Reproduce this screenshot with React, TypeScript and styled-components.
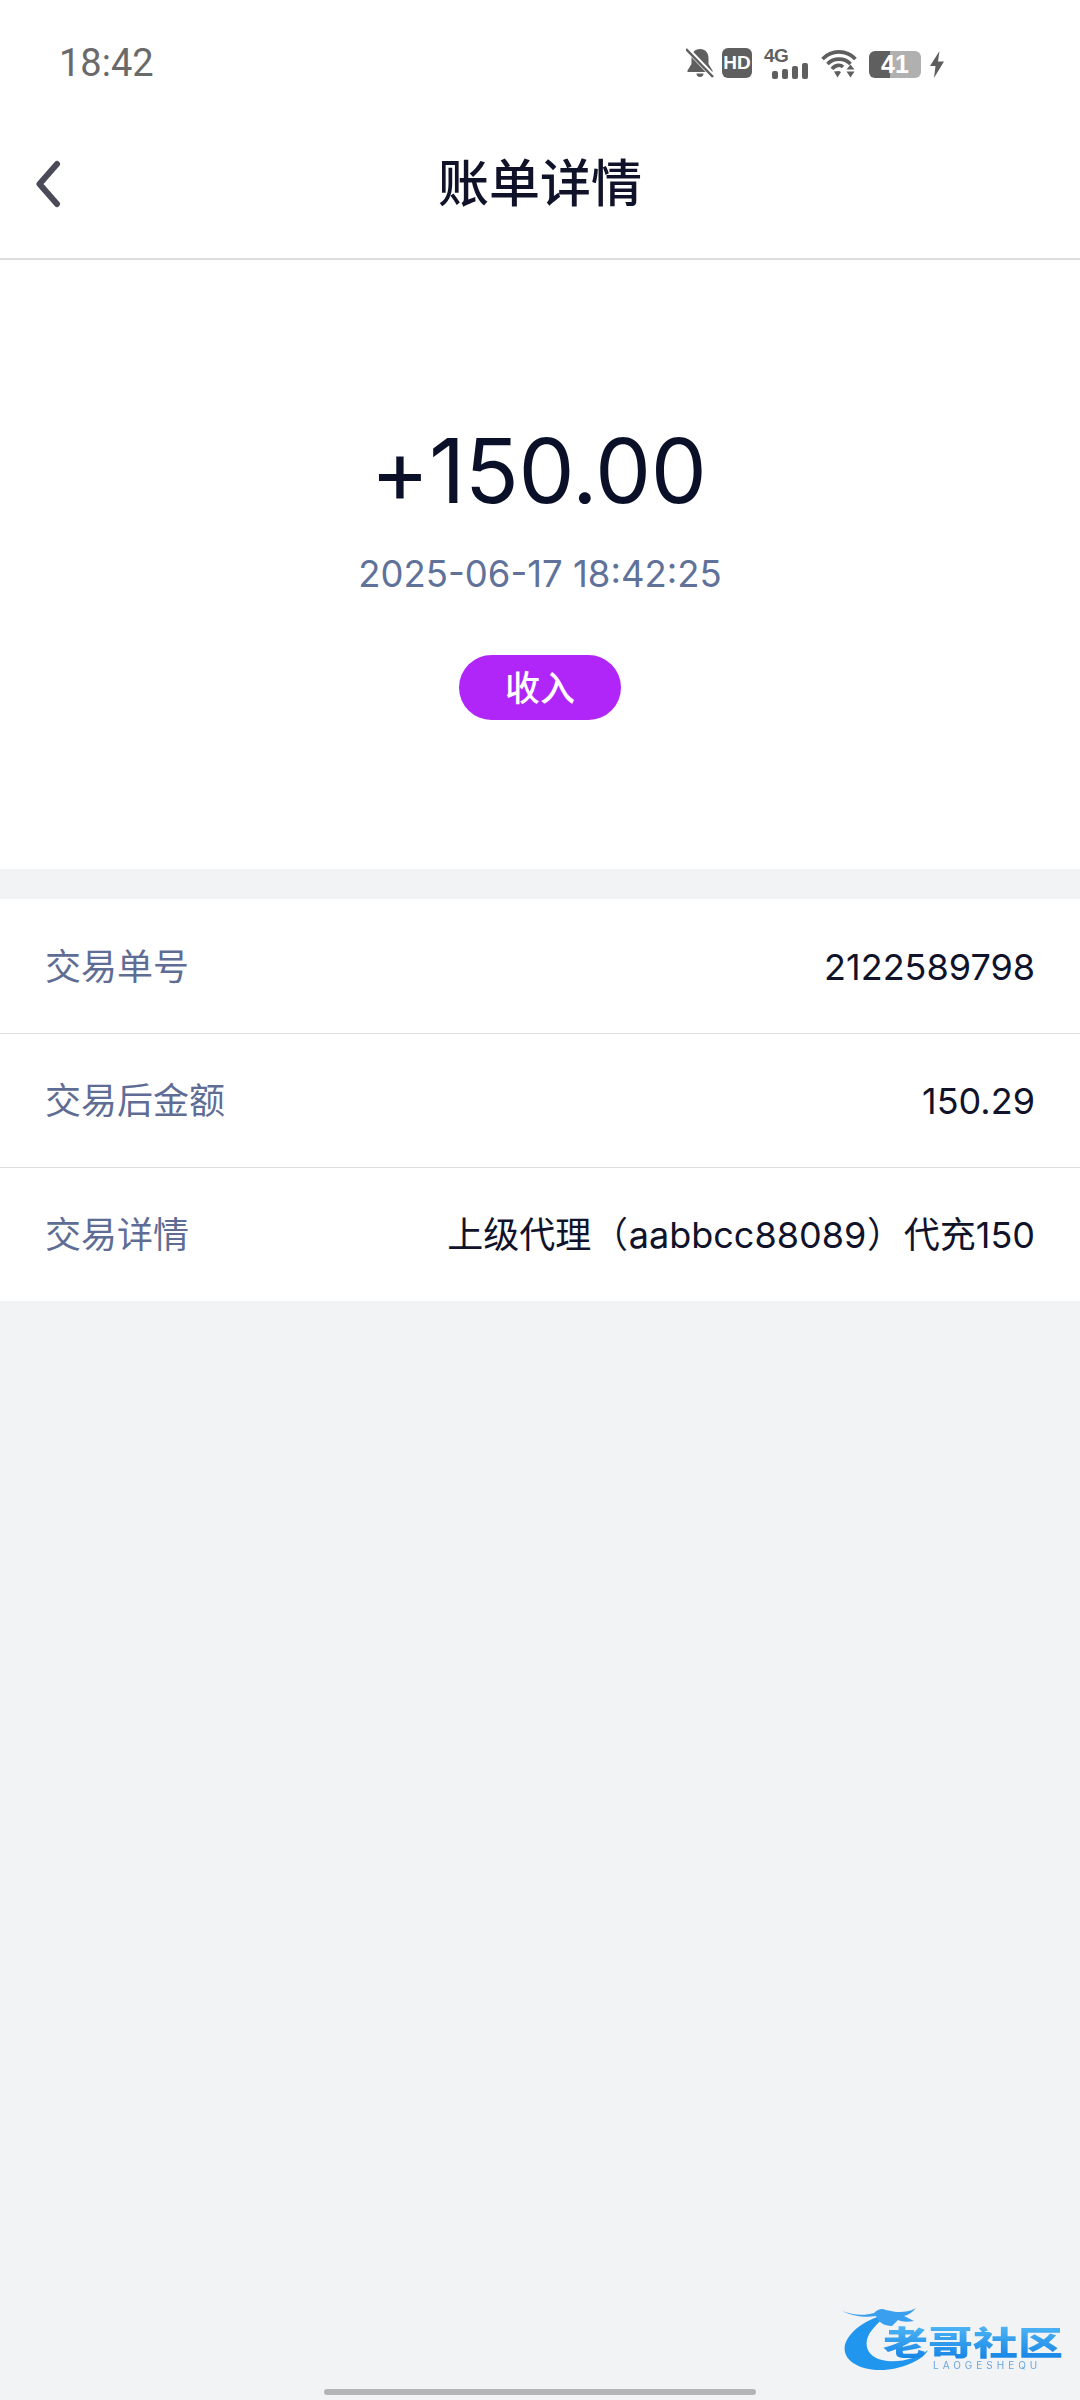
import React from "react";
import styled, { createGlobalStyle } from "styled-components";

const GlobalStyle = createGlobalStyle`
  html, body { margin: 0; padding: 0; background: #f2f3f5; }
  * { box-sizing: border-box; }
  body { font-family: Inter, "Noto Sans CJK SC", sans-serif; }
`;

const Page = styled.div`
  position: relative;
  width: 1080px;
  height: 2400px;
  overflow: hidden;
  background: #f2f3f5;
  display: flex;
  flex-direction: column;
`;

const StatusBar = styled.div`
  height: 80px;
  padding: 45px 136px 0 59px;
  background: #fff;
  display: flex;
  justify-content: space-between;
  align-items: flex-start;
`;

const Clock = styled.span`
  font-family: Roboto, sans-serif;
  font-size: 38px;
  line-height: 36px;
  color: #6a6a6a;
`;

const StatusIcons = styled.div`
  display: flex;
  align-items: flex-end;
  height: 32px;
  margin-top: 1px;
  color: #5f5f5f;
`;

const IconSlot = styled.div<{ $gap: number }>`
  display: flex;
  margin-right: ${(p) => p.$gap}px;
`;

const HdBadge = styled.div`
  width: 30px;
  height: 30px;
  margin-right: 12px;
  border-radius: 6px;
  background: #5f5f5f;
  color: #fff;
  font: 800 19px/30px "Liberation Sans", sans-serif;
  text-align: center;
`;

const Signal = styled.div`
  width: 44px;
  height: 30px;
  margin-right: 13px;
  display: flex;
  flex-direction: column;
  justify-content: space-between;
`;

const SignalLabel = styled.span`
  font: 800 19px/15px "Liberation Sans", sans-serif;
  letter-spacing: -0.5px;
`;

const SignalBars = styled.div`
  display: flex;
  align-items: flex-end;
  justify-content: flex-end;
  gap: 4px;
`;

const SignalBar = styled.i<{ $h: number }>`
  display: block;
  width: 6px;
  height: ${(p) => p.$h}px;
  border-radius: 2px;
  background: #5f5f5f;
`;

const Battery = styled.div`
  width: 52px;
  height: 27px;
  margin-right: 9px;
  border-radius: 6px;
  background: linear-gradient(90deg, #5f5f5f 0 41%, #b0b0b0 41% 100%);
  color: #fff;
  font: 700 25px/27px "Liberation Sans", sans-serif;
  text-align: center;
`;

const Header = styled.header`
  height: 180px;
  padding: 30px 32px 0;
  background: #fff;
  border-bottom: 2px solid #dcdcdc;
  position: relative;
  display: flex;
  align-items: center;
  justify-content: center;
`;

const BackButton = styled.button`
  position: absolute;
  left: 34px;
  top: 80px;
  width: 28px;
  height: 48px;
  padding: 0;
  border: 0;
  background: none;
  display: flex;
`;

const Title = styled.h1`
  margin: 0;
  font-size: 51px;
  font-weight: 500;
  line-height: 60px;
  color: #0f1228;
`;

const Summary = styled.section`
  height: 609px;
  padding-top: 156px;
  background: #fff;
  display: flex;
  flex-direction: column;
  align-items: center;
`;

const Amount = styled.div`
  font-size: 89px;
  line-height: 110px;
  letter-spacing: -0.4px;
  margin-right: 3px;
  color: #0b1029;
`;

const DateText = styled.div`
  margin-top: 26px;
  font-size: 36.5px;
  line-height: 44px;
  color: #60729a;
`;

const Pill = styled.div`
  margin-top: 59px;
  width: 162px;
  height: 65px;
  border-radius: 33px;
  background: #b026f8;
  color: #fff;
  font-size: 35px;
  font-weight: 500;
  line-height: 67px;
  text-align: center;
`;

const List = styled.section`
  margin-top: 30px;
  background: #fff;
`;

const Row = styled.div`
  height: 134px;
  padding: 1px 45px 0;
  display: flex;
  align-items: center;
  justify-content: space-between;
  & + & { border-top: 1px solid #dfdfdf; }
`;

const Label = styled.span`
  font-size: 36px;
  line-height: 44px;
  color: #5f6d95;
`;

const Value = styled.span`
  font-size: 36px;
  line-height: 44px;
  color: #10132a;
`;

const Paren = styled.span`
  margin: 0 0.75px;
`;

const Watermark = styled.div`
  position: absolute;
  left: 842px;
  top: 2304px;
  width: 226px;
  height: 72px;
  filter: blur(0.5px);
`;

const WatermarkName = styled.div`
  position: absolute;
  left: 41px;
  top: 16px;
  font-size: 45px;
  font-weight: 900;
  line-height: 46px;
  white-space: nowrap;
  transform: scaleY(0.74);
  background: linear-gradient(180deg, #4db4f4 0%, #1583e6 100%);
  -webkit-background-clip: text;
  background-clip: text;
  color: transparent;
`;

const WatermarkSub = styled.div`
  position: absolute;
  left: 91px;
  top: 56px;
  font-size: 10px;
  line-height: 10px;
  letter-spacing: 4px;
  white-space: nowrap;
  color: #6ca6dd;
`;

const HomeBar = styled.div`
  position: absolute;
  left: 324px;
  top: 2389px;
  width: 432px;
  height: 6px;
  border-radius: 3px;
  background: #b4b4b4;
`;

const rows: { label: string; value: React.ReactNode }[] = [
  { label: "交易单号", value: "2122589798" },
  { label: "交易后金额", value: "150.29" },
  {
    label: "交易详情",
    value: (
      <>
        上级代理<Paren>（</Paren>aabbcc88089<Paren>）</Paren>代充150
      </>
    ),
  },
];

export default function App() {
  return (
    <Page>
      <GlobalStyle />
      <StatusBar>
        <Clock>18:42</Clock>
        <StatusIcons>
          <IconSlot $gap={8}>
            <svg width="28" height="30" viewBox="0 0 28 30">
              <path d="M14 1c5.500 0 8.500 4 8.500 9v6l4 6.500v1.500H1.500v-1.500l4-6.500V10C5.500 5 8.500 1 14 1z" fill="#5f5f5f" />
              <path d="M10.500 25.500h7a3.500 3.500 0 0 1-7 0z" fill="#5f5f5f" />
              <path d="M1 1l26 27" stroke="#fff" strokeWidth="5" />
              <path d="M0 1l27 28" stroke="#5f5f5f" strokeWidth="2.500" />
            </svg>
          </IconSlot>
          <HdBadge>HD</HdBadge>
          <Signal>
            <SignalLabel>4G</SignalLabel>
            <SignalBars>
              <SignalBar $h={8} />
              <SignalBar $h={10} />
              <SignalBar $h={13} />
              <SignalBar $h={16} />
            </SignalBars>
          </Signal>
          <IconSlot $gap={12}>
            <svg width="36" height="29" viewBox="0 0 36 29">
              <g fill="none" stroke="#5f5f5f" strokeWidth="3.600">
                <path d="M1.500 10C10.500 0.500 25.500 0.500 34.500 10" />
                <path d="M6.500 15C12.500 8.500 23.500 8.500 29.500 15" />
                <path d="M11 20C14.500 15.500 19.500 15.500 22 18" />
              </g>
              <path d="M13 22.500l5-.5 2 1-3.500 5.500z" fill="#5f5f5f" />
              <path d="M29.500 15.500l4 5h-8zM29.500 28.500l-4-6h8z" fill="#5f5f5f" />
            </svg>
          </IconSlot>
          <Battery>41</Battery>
          <IconSlot $gap={0}>
            <svg width="14" height="27" viewBox="0 0 14 27">
              <path d="M9.500 0L0 15h5.500L4 27l10-16.500H8z" fill="#5f5f5f" />
            </svg>
          </IconSlot>
        </StatusIcons>
      </StatusBar>
      <Header>
        <BackButton aria-label="back">
          <svg width="28" height="48" viewBox="0 0 28 48">
            <path d="M23 4L5.500 24 23 44" fill="none" stroke="#4a4a58" strokeWidth="6" strokeLinecap="round" strokeLinejoin="round" />
          </svg>
        </BackButton>
        <Title>账单详情</Title>
      </Header>
      <Summary>
        <Amount>+150.00</Amount>
        <DateText>2025-06-17 18:42:25</DateText>
        <Pill>收入</Pill>
      </Summary>
      <List>
        {rows.map((row) => (
          <Row key={row.label}>
            <Label>{row.label}</Label>
            <Value>{row.value}</Value>
          </Row>
        ))}
      </List>
      <Watermark>
        <svg width="226" height="72" viewBox="0 0 226 72">
          <path d="M38 12C14 20 0 36 3 48c3 14 27 22 52 16 15-4 27-10 31-18-10 8-30 14-46 10C24 52 20 38 30 26c6-8 12-12 18-16z" fill="#2196ee" />
          <path d="M0 7c10 4 22 5 32 2 4-4 8-5 12-3l10 2c6 0 14 0 20-4-3 4-8 7-12 8l10 5c-6 1-12 1-16-1l-6 6c-8 0-14-4-16-10C24 14 10 12 0 7z" fill="#3a9fee" />
        </svg>
        <WatermarkName>老哥社区</WatermarkName>
        <WatermarkSub>LAOGESHEQU</WatermarkSub>
      </Watermark>
      <HomeBar />
    </Page>
  );
}
